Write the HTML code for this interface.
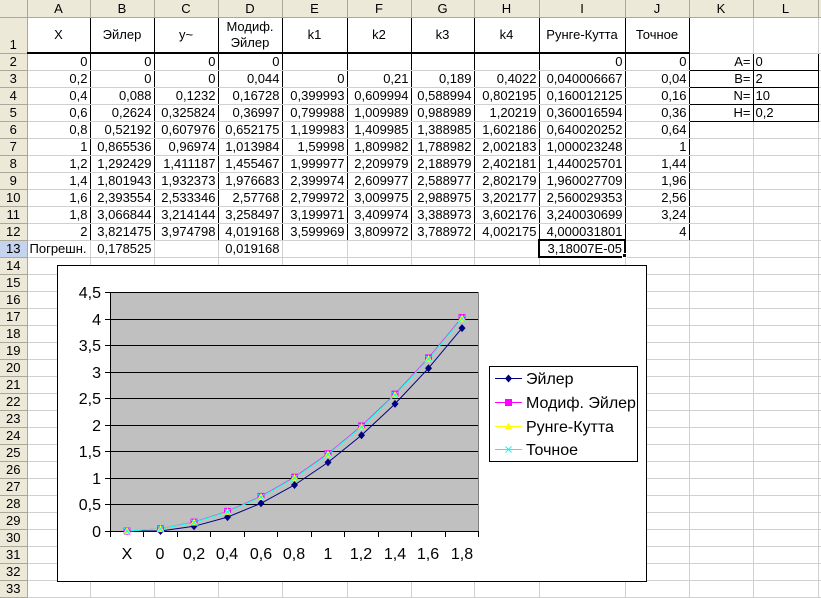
<!DOCTYPE html>
<html><head><meta charset="utf-8"><style>
*{margin:0;padding:0;box-sizing:border-box}
body{width:821px;height:586px;overflow:hidden;background:#fff;font-family:"Liberation Sans",Arial,sans-serif;font-size:13px;position:relative}
table{border-collapse:collapse;table-layout:fixed;width:821px;position:absolute;left:0;top:0}
td{height:17px;border-right:1px solid #d0d0d0;border-bottom:1px solid #d0d0d0;text-align:right;padding:0 2px;white-space:nowrap;overflow:hidden;line-height:15px;color:#000}
tr.h td{background:#ECE9D8;text-align:center;border-right:1px solid #ACA899;border-bottom:1px solid #ACA899;color:#000}
td.r{background:#ECE9D8;text-align:center;border-right:1px solid #ACA899;border-bottom:1px solid #ACA899}
td.sel{background:#C5D3EE}
tr.r1 td{height:36px;text-align:center;vertical-align:middle;line-height:16px}
tr.r1 td.r{vertical-align:bottom}
tr.r1 td.b{border:1px solid #000;border-bottom:2px solid #000}
td.v{border-left:1px solid #000;border-right:1px solid #000}
td.k{border:1px solid #000}
td.kl{border:1px solid #000;text-align:left}
td.cur{border:2px solid #000}
</style></head><body>
<table>
<colgroup><col style="width:27px"><col style="width:63px"><col style="width:64px"><col style="width:64px"><col style="width:64px"><col style="width:65px"><col style="width:64px"><col style="width:63px"><col style="width:65px"><col style="width:86px"><col style="width:64px"><col style="width:64px"><col style="width:65px"><col style="width:3px"></colgroup>
<tr class="h"><td></td><td>A</td><td>B</td><td>C</td><td>D</td><td>E</td><td>F</td><td>G</td><td>H</td><td class="sel">I</td><td>J</td><td>K</td><td>L</td><td></td></tr>
<tr class="r1"><td class="r">1</td><td class="b">X</td><td class="b">Эйлер</td><td class="b">y~</td><td class="b">Модиф.<br>Эйлер</td><td class="b">k1</td><td class="b">k2</td><td class="b">k3</td><td class="b">k4</td><td class="b">Рунге-Кутта</td><td class="b">Точное</td><td></td><td></td><td></td></tr>
<tr><td class="r">2</td><td class="v">0</td><td class="v">0</td><td class="v">0</td><td class="v">0</td><td class="v"></td><td class="v"></td><td class="v"></td><td class="v"></td><td class="v">0</td><td class="v">0</td><td class="k">A=</td><td class="kl">0</td><td></td></tr>
<tr><td class="r">3</td><td class="v">0,2</td><td class="v">0</td><td class="v">0</td><td class="v">0,044</td><td class="v">0</td><td class="v">0,21</td><td class="v">0,189</td><td class="v">0,4022</td><td class="v">0,040006667</td><td class="v">0,04</td><td class="k">B=</td><td class="kl">2</td><td></td></tr>
<tr><td class="r">4</td><td class="v">0,4</td><td class="v">0,088</td><td class="v">0,1232</td><td class="v">0,16728</td><td class="v">0,399993</td><td class="v">0,609994</td><td class="v">0,588994</td><td class="v">0,802195</td><td class="v">0,160012125</td><td class="v">0,16</td><td class="k">N=</td><td class="kl">10</td><td></td></tr>
<tr><td class="r">5</td><td class="v">0,6</td><td class="v">0,2624</td><td class="v">0,325824</td><td class="v">0,36997</td><td class="v">0,799988</td><td class="v">1,009989</td><td class="v">0,988989</td><td class="v">1,20219</td><td class="v">0,360016594</td><td class="v">0,36</td><td class="k">H=</td><td class="kl">0,2</td><td></td></tr>
<tr><td class="r">6</td><td class="v">0,8</td><td class="v">0,52192</td><td class="v">0,607976</td><td class="v">0,652175</td><td class="v">1,199983</td><td class="v">1,409985</td><td class="v">1,388985</td><td class="v">1,602186</td><td class="v">0,640020252</td><td class="v">0,64</td><td></td><td></td><td></td></tr>
<tr><td class="r">7</td><td class="v">1</td><td class="v">0,865536</td><td class="v">0,96974</td><td class="v">1,013984</td><td class="v">1,59998</td><td class="v">1,809982</td><td class="v">1,788982</td><td class="v">2,002183</td><td class="v">1,000023248</td><td class="v">1</td><td></td><td></td><td></td></tr>
<tr><td class="r">8</td><td class="v">1,2</td><td class="v">1,292429</td><td class="v">1,411187</td><td class="v">1,455467</td><td class="v">1,999977</td><td class="v">2,209979</td><td class="v">2,188979</td><td class="v">2,402181</td><td class="v">1,440025701</td><td class="v">1,44</td><td></td><td></td><td></td></tr>
<tr><td class="r">9</td><td class="v">1,4</td><td class="v">1,801943</td><td class="v">1,932373</td><td class="v">1,976683</td><td class="v">2,399974</td><td class="v">2,609977</td><td class="v">2,588977</td><td class="v">2,802179</td><td class="v">1,960027709</td><td class="v">1,96</td><td></td><td></td><td></td></tr>
<tr><td class="r">10</td><td class="v">1,6</td><td class="v">2,393554</td><td class="v">2,533346</td><td class="v">2,57768</td><td class="v">2,799972</td><td class="v">3,009975</td><td class="v">2,988975</td><td class="v">3,202177</td><td class="v">2,560029353</td><td class="v">2,56</td><td></td><td></td><td></td></tr>
<tr><td class="r">11</td><td class="v">1,8</td><td class="v">3,066844</td><td class="v">3,214144</td><td class="v">3,258497</td><td class="v">3,199971</td><td class="v">3,409974</td><td class="v">3,388973</td><td class="v">3,602176</td><td class="v">3,240030699</td><td class="v">3,24</td><td></td><td></td><td></td></tr>
<tr><td class="r">12</td><td class="v">2</td><td class="v">3,821475</td><td class="v">3,974798</td><td class="v">4,019168</td><td class="v">3,599969</td><td class="v">3,809972</td><td class="v">3,788972</td><td class="v">4,002175</td><td class="v">4,000031801</td><td class="v">4</td><td></td><td></td><td></td></tr>
<tr><td class="r sel">13</td><td style="text-align:left">Погрешн.</td><td>0,178525</td><td></td><td>0,019168</td><td></td><td></td><td></td><td></td><td class="cur">3,18007E-05</td><td></td><td></td><td></td><td></td></tr>
<tr><td class="r">14</td><td></td><td></td><td></td><td></td><td></td><td></td><td></td><td></td><td></td><td></td><td></td><td></td><td></td></tr>
<tr><td class="r">15</td><td></td><td></td><td></td><td></td><td></td><td></td><td></td><td></td><td></td><td></td><td></td><td></td><td></td></tr>
<tr><td class="r">16</td><td></td><td></td><td></td><td></td><td></td><td></td><td></td><td></td><td></td><td></td><td></td><td></td><td></td></tr>
<tr><td class="r">17</td><td></td><td></td><td></td><td></td><td></td><td></td><td></td><td></td><td></td><td></td><td></td><td></td><td></td></tr>
<tr><td class="r">18</td><td></td><td></td><td></td><td></td><td></td><td></td><td></td><td></td><td></td><td></td><td></td><td></td><td></td></tr>
<tr><td class="r">19</td><td></td><td></td><td></td><td></td><td></td><td></td><td></td><td></td><td></td><td></td><td></td><td></td><td></td></tr>
<tr><td class="r">20</td><td></td><td></td><td></td><td></td><td></td><td></td><td></td><td></td><td></td><td></td><td></td><td></td><td></td></tr>
<tr><td class="r">21</td><td></td><td></td><td></td><td></td><td></td><td></td><td></td><td></td><td></td><td></td><td></td><td></td><td></td></tr>
<tr><td class="r">22</td><td></td><td></td><td></td><td></td><td></td><td></td><td></td><td></td><td></td><td></td><td></td><td></td><td></td></tr>
<tr><td class="r">23</td><td></td><td></td><td></td><td></td><td></td><td></td><td></td><td></td><td></td><td></td><td></td><td></td><td></td></tr>
<tr><td class="r">24</td><td></td><td></td><td></td><td></td><td></td><td></td><td></td><td></td><td></td><td></td><td></td><td></td><td></td></tr>
<tr><td class="r">25</td><td></td><td></td><td></td><td></td><td></td><td></td><td></td><td></td><td></td><td></td><td></td><td></td><td></td></tr>
<tr><td class="r">26</td><td></td><td></td><td></td><td></td><td></td><td></td><td></td><td></td><td></td><td></td><td></td><td></td><td></td></tr>
<tr><td class="r">27</td><td></td><td></td><td></td><td></td><td></td><td></td><td></td><td></td><td></td><td></td><td></td><td></td><td></td></tr>
<tr><td class="r">28</td><td></td><td></td><td></td><td></td><td></td><td></td><td></td><td></td><td></td><td></td><td></td><td></td><td></td></tr>
<tr><td class="r">29</td><td></td><td></td><td></td><td></td><td></td><td></td><td></td><td></td><td></td><td></td><td></td><td></td><td></td></tr>
<tr><td class="r">30</td><td></td><td></td><td></td><td></td><td></td><td></td><td></td><td></td><td></td><td></td><td></td><td></td><td></td></tr>
<tr><td class="r">31</td><td></td><td></td><td></td><td></td><td></td><td></td><td></td><td></td><td></td><td></td><td></td><td></td><td></td></tr>
<tr><td class="r">32</td><td></td><td></td><td></td><td></td><td></td><td></td><td></td><td></td><td></td><td></td><td></td><td></td><td></td></tr>
<tr><td class="r">33</td><td></td><td></td><td></td><td></td><td></td><td></td><td></td><td></td><td></td><td></td><td></td><td></td><td></td></tr>
</table>
<div style="position:absolute;left:622px;top:253px;width:5px;height:5px;background:#000;border:1px solid #fff"></div>
<svg width="821" height="586" style="position:absolute;left:0;top:0" font-family="Liberation Sans, Arial, sans-serif" font-size="16">
<rect x="57.5" y="265.5" width="589" height="316" fill="#fff" stroke="#000"/>
<rect x="110.5" y="292.5" width="368" height="239" fill="#c0c0c0" stroke="#808080"/>
<g stroke="#000" stroke-width="1">
<line x1="110" y1="292.5" x2="478" y2="292.5"/><line x1="110" y1="319.5" x2="478" y2="319.5"/><line x1="110" y1="345.5" x2="478" y2="345.5"/><line x1="110" y1="372.5" x2="478" y2="372.5"/><line x1="110" y1="398.5" x2="478" y2="398.5"/><line x1="110" y1="425.5" x2="478" y2="425.5"/><line x1="110" y1="451.5" x2="478" y2="451.5"/><line x1="110" y1="478.5" x2="478" y2="478.5"/><line x1="110" y1="504.5" x2="478" y2="504.5"/><line x1="105" y1="531.5" x2="478" y2="531.5"/>
<line x1="110.5" y1="292" x2="110.5" y2="531"/>
<line x1="105" y1="292.5" x2="110" y2="292.5"/><line x1="105" y1="319.5" x2="110" y2="319.5"/><line x1="105" y1="345.5" x2="110" y2="345.5"/><line x1="105" y1="372.5" x2="110" y2="372.5"/><line x1="105" y1="398.5" x2="110" y2="398.5"/><line x1="105" y1="425.5" x2="110" y2="425.5"/><line x1="105" y1="451.5" x2="110" y2="451.5"/><line x1="105" y1="478.5" x2="110" y2="478.5"/><line x1="105" y1="504.5" x2="110" y2="504.5"/>
<line x1="110.5" y1="531" x2="110.5" y2="537"/><line x1="143.5" y1="531" x2="143.5" y2="537"/><line x1="177.5" y1="531" x2="177.5" y2="537"/><line x1="210.5" y1="531" x2="210.5" y2="537"/><line x1="244.5" y1="531" x2="244.5" y2="537"/><line x1="277.5" y1="531" x2="277.5" y2="537"/><line x1="311.5" y1="531" x2="311.5" y2="537"/><line x1="344.5" y1="531" x2="344.5" y2="537"/><line x1="378.5" y1="531" x2="378.5" y2="537"/><line x1="411.5" y1="531" x2="411.5" y2="537"/><line x1="445.5" y1="531" x2="445.5" y2="537"/><line x1="478.5" y1="531" x2="478.5" y2="537"/>
</g>
<g text-anchor="end">
<text x="101" y="298">4,5</text><text x="101" y="325">4</text><text x="101" y="351">3,5</text><text x="101" y="378">3</text><text x="101" y="404">2,5</text><text x="101" y="431">2</text><text x="101" y="457">1,5</text><text x="101" y="484">1</text><text x="101" y="510">0,5</text><text x="101" y="537">0</text>
</g>
<g text-anchor="middle">
<text x="127" y="559">X</text><text x="160" y="559">0</text><text x="194" y="559">0,2</text><text x="227" y="559">0,4</text><text x="261" y="559">0,6</text><text x="294" y="559">0,8</text><text x="328" y="559">1</text><text x="361" y="559">1,2</text><text x="395" y="559">1,4</text><text x="428" y="559">1,6</text><text x="462" y="559">1,8</text>
</g>
<!-- x: 127,160.5,194,227.5,261,294.5,328,361.5,395,428.5,462 -->
<polyline fill="none" stroke="#000080" points="127,531 160.5,531 194,526.3 227.5,517.1 261,503.3 294.5,485 328,462.4 361.5,435.3 395,403.9 428.5,368.2 462,328.1"/>
<polyline fill="none" stroke="#ff00ff" points="127,531 160.5,528.7 194,522.1 227.5,511.4 261,496.4 294.5,477.2 328,453.7 361.5,426 395,394.1 428.5,357.9 462,317.6"/>
<polyline fill="none" stroke="#ffff00" points="127,531 160.5,528.9 194,522.5 227.5,511.9 261,497 294.5,477.9 328,454.5 361.5,426.9 395,395 428.5,358.9 462,318.6"/>
<polyline fill="none" stroke="#00ffff" points="127,531 160.5,528.9 194,522.5 227.5,511.9 261,497 294.5,477.9 328,454.5 361.5,426.9 395,395 428.5,358.9 462,318.6"/>
<g fill="#000080">
<path d="M127 527l3.5 4-3.5 4-3.5-4z"/><path d="M160.5 527l3.5 4-3.5 4-3.5-4z"/><path d="M194 522.3l3.5 4-3.5 4-3.5-4z"/><path d="M227.5 513.1l3.5 4-3.5 4-3.5-4z"/><path d="M261 499.3l3.5 4-3.5 4-3.5-4z"/><path d="M294.5 481l3.5 4-3.5 4-3.5-4z"/><path d="M328 458.4l3.5 4-3.5 4-3.5-4z"/><path d="M361.5 431.3l3.5 4-3.5 4-3.5-4z"/><path d="M395 399.9l3.5 4-3.5 4-3.5-4z"/><path d="M428.5 364.2l3.5 4-3.5 4-3.5-4z"/><path d="M462 324.1l3.5 4-3.5 4-3.5-4z"/>
</g>
<g fill="#ff00ff">
<rect x="123.5" y="527.5" width="7" height="7"/><rect x="157" y="525.2" width="7" height="7"/><rect x="190.5" y="518.6" width="7" height="7"/><rect x="224" y="507.9" width="7" height="7"/><rect x="257.5" y="492.9" width="7" height="7"/><rect x="291" y="473.7" width="7" height="7"/><rect x="324.5" y="450.2" width="7" height="7"/><rect x="358" y="422.5" width="7" height="7"/><rect x="391.5" y="390.6" width="7" height="7"/><rect x="425" y="354.4" width="7" height="7"/><rect x="458.5" y="314.1" width="7" height="7"/>
</g>
<g fill="#ffff00">
<path d="M127 527l4 7h-8z"/><path d="M160.5 524.9l4 7h-8z"/><path d="M194 518.5l4 7h-8z"/><path d="M227.5 507.9l4 7h-8z"/><path d="M261 493l4 7h-8z"/><path d="M294.5 473.9l4 7h-8z"/><path d="M328 450.5l4 7h-8z"/><path d="M361.5 422.9l4 7h-8z"/><path d="M395 391l4 7h-8z"/><path d="M428.5 354.9l4 7h-8z"/><path d="M462 314.6l4 7h-8z"/>
</g>
<g stroke="#00ffff" stroke-width="1">
<path d="M124 528l6 6M130 528l-6 6"/><path d="M157.5 525.9l6 6M163.5 525.9l-6 6"/><path d="M191 519.5l6 6M197 519.5l-6 6"/><path d="M224.5 508.9l6 6M230.5 508.9l-6 6"/><path d="M258 494l6 6M264 494l-6 6"/><path d="M291.5 474.9l6 6M297.5 474.9l-6 6"/><path d="M325 451.5l6 6M331 451.5l-6 6"/><path d="M358.5 423.9l6 6M364.5 423.9l-6 6"/><path d="M392 392l6 6M398 392l-6 6"/><path d="M425.5 355.9l6 6M431.5 355.9l-6 6"/><path d="M459 315.6l6 6M465 315.6l-6 6"/>
</g>
<rect x="489.5" y="366.5" width="148" height="95" fill="#fff" stroke="#000"/>
<line x1="495" y1="378.5" x2="522" y2="378.5" stroke="#000080"/><path d="M508.5 374.5l3.5 4-3.5 4-3.5-4z" fill="#000080"/>
<line x1="495" y1="402.5" x2="522" y2="402.5" stroke="#ff00ff"/><rect x="505" y="399" width="7" height="7" fill="#ff00ff"/>
<line x1="495" y1="426.5" x2="522" y2="426.5" stroke="#ffff00"/><path d="M508.5 422.5l4 7h-8z" fill="#ffff00"/>
<line x1="495" y1="449.5" x2="522" y2="449.5" stroke="#00ffff"/><path d="M505.5 446.5l6 6M511.5 446.5l-6 6" stroke="#00ffff"/>
<text x="526" y="384">Эйлер</text>
<text x="526" y="408">Модиф. Эйлер</text>
<text x="526" y="432">Рунге-Кутта</text>
<text x="526" y="455">Точное</text>
</svg>
</body></html>
